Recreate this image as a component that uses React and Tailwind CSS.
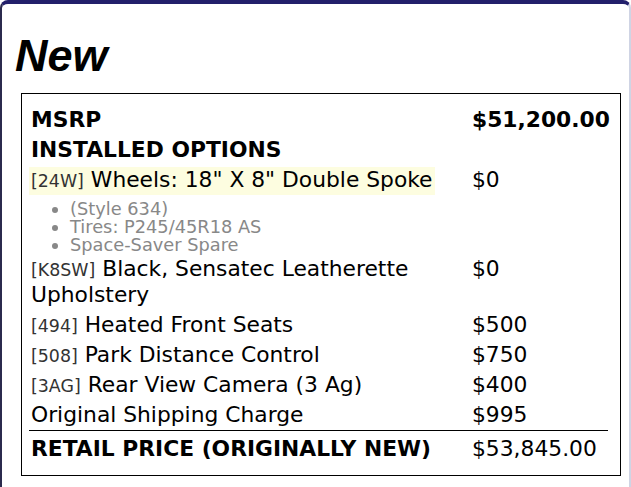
const rows = [
  { code: "[494]", label: "Heated Front Seats", price: "$500" },
  { code: "[508]", label: "Park Distance Control", price: "$750" },
  { code: "[3AG]", label: "Rear View Camera (3 Ag)", price: "$400" },
];

const Code = ({ children }) => (
  <span className="text-[17.4px] leading-none text-[#333]">{children}</span>
);

const App = () => {
  return (
    <div className="h-[487px] overflow-hidden bg-white">
      <div className="h-[520px] rounded-t-[8px] border-t-[4px] border-l-[2px] border-r-[2px] border-t-[#221f6b] border-l-[#2b2a4d] border-r-[#cfd4e4] pl-[13px] pt-[30px]">
        <h1 className="font-['Liberation_Sans',Arial,sans-serif] text-[45px] font-bold italic leading-[43px] text-black">
          New
        </h1>

        <div className="mt-[16px] ml-[6px] w-[600px] border border-black pl-[7px] pt-[11px] pb-[11px] font-['DejaVu_Sans',sans-serif] text-[21.8px] leading-[26px] text-black">
          <div className="w-[579px]">
            {/* MSRP */}
            <div className="grid grid-cols-[441px_1fr]">
              <div className="px-[2px] py-[2px] font-bold">MSRP</div>
              <div className="px-[2px] py-[2px] font-bold">$51,200.00</div>
            </div>

            <div className="grid grid-cols-[441px_1fr]">
              <div className="px-[2px] py-[2px] font-bold">INSTALLED OPTIONS</div>
              <div className="px-[2px] py-[2px]"></div>
            </div>

            {/* highlighted option */}
            <div className="grid grid-cols-[441px_1fr]">
              <div className="pt-[2px]">
                <div className="w-[406px] whitespace-nowrap bg-[#fdfde0] pl-[2px] pb-[2px]">
                  <Code>[24W]</Code> Wheels: 18" X 8" Double Spoke
                </div>
              </div>
              <div className="px-[2px] py-[2px]">$0</div>
            </div>

            <div className="grid grid-cols-[441px_1fr]">
              <ul className="list-disc pl-[41px] pt-[5px] text-[17.8px] leading-[18px] text-[#888]">
                <li>(Style 634)</li>
                <li>Tires: P245/45R18 AS</li>
                <li>Space-Saver Spare</li>
              </ul>
              <div></div>
            </div>

            <div className="grid grid-cols-[441px_1fr]">
              <div className="w-[406px] px-[2px] py-[2px]">
                <Code>[K8SW]</Code> Black, Sensatec Leatherette Upholstery
              </div>
              <div className="px-[2px] py-[2px]">$0</div>
            </div>

            {rows.map((r) => (
              <div key={r.code} className="grid grid-cols-[441px_1fr]">
                <div className="px-[2px] py-[2px]">
                  <Code>{r.code}</Code> {r.label}
                </div>
                <div className="px-[2px] py-[2px]">{r.price}</div>
              </div>
            ))}

            <div className="grid grid-cols-[441px_1fr]">
              <div className="px-[2px] py-[2px]">Original Shipping Charge</div>
              <div className="px-[2px] py-[2px]">$995</div>
            </div>

            {/* total */}
            <div className="grid grid-cols-[441px_1fr] border-t border-black">
              <div className="px-[2px] pt-[5px] pb-[2px] font-bold whitespace-nowrap">
                RETAIL PRICE (ORIGINALLY NEW)
              </div>
              <div className="px-[2px] pt-[5px] pb-[2px]">$53,845.00</div>
            </div>
          </div>
        </div>
      </div>
    </div>
  );
};

export default App;
